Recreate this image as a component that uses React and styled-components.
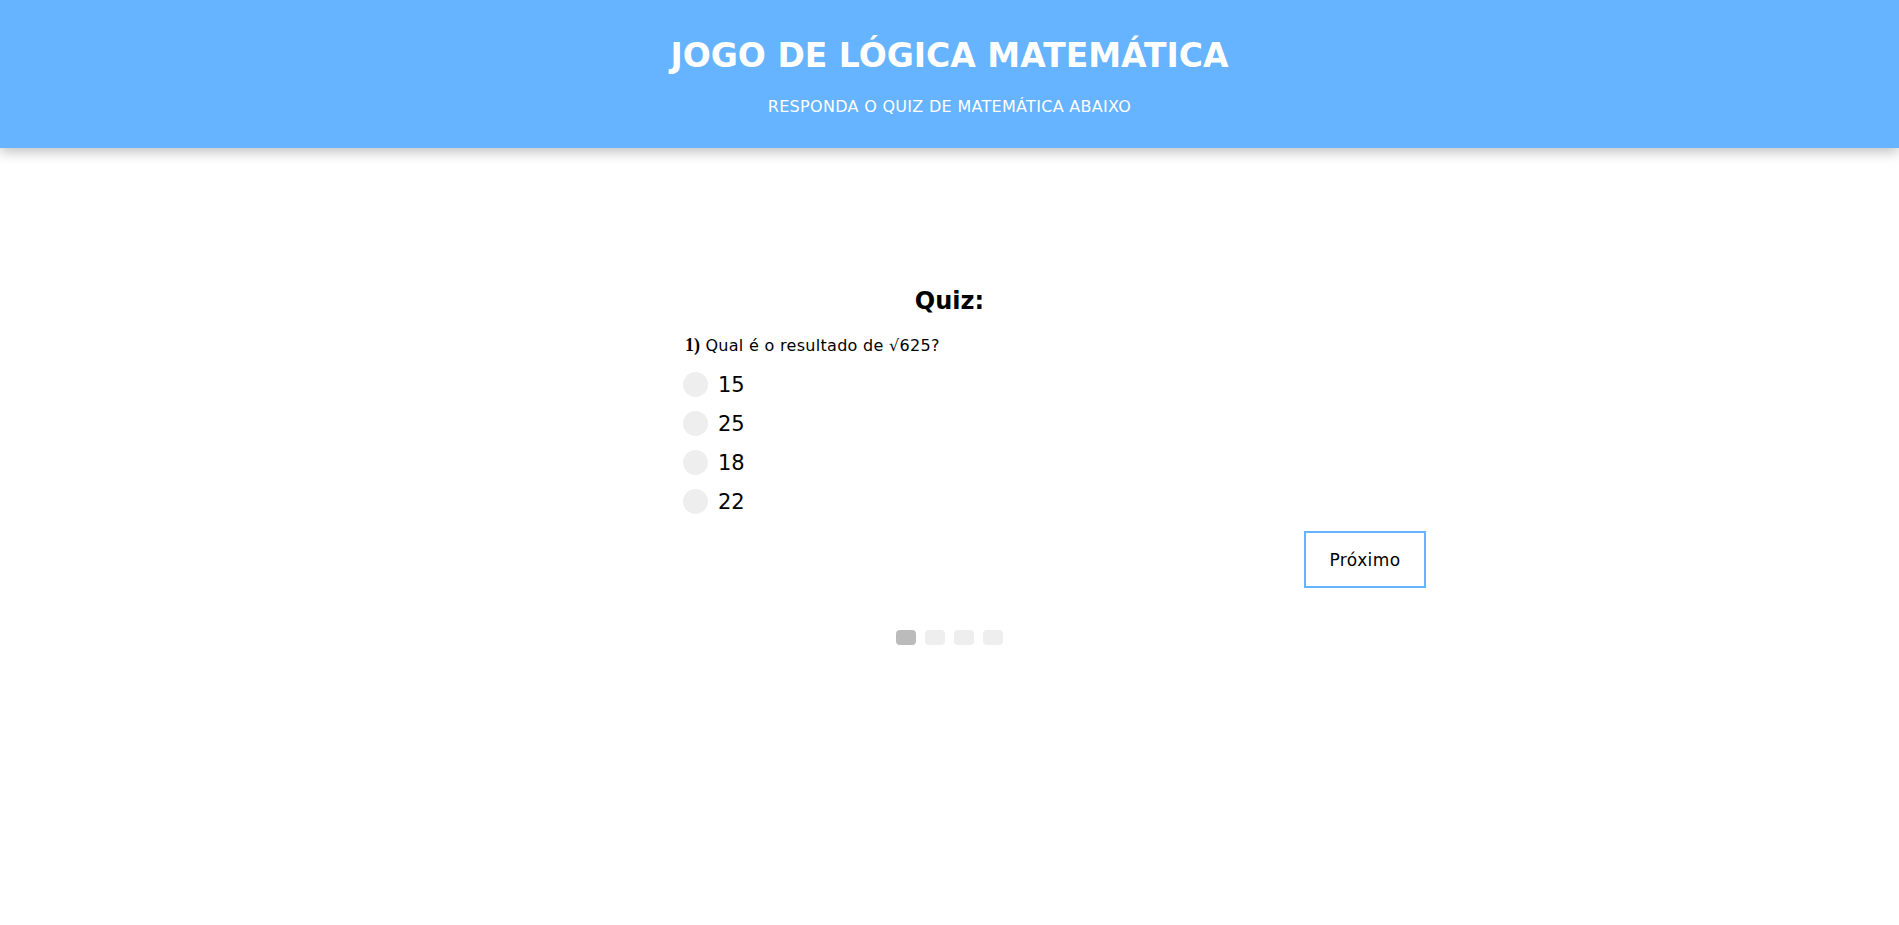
import React, { useState } from "react";
import styled, { createGlobalStyle } from "styled-components";

const GlobalStyle = createGlobalStyle`
  body {
    margin: 0;
    background: #fff;
    font-family: "DejaVu Sans", Verdana, sans-serif;
    color: #000;
  }
`;

const Header = styled.header`
  height: 148px;
  background: #66b3ff;
  box-shadow: 0 4px 12px rgba(0, 0, 0, 0.25);
  display: flex;
  flex-direction: column;
  align-items: center;
  color: #fff;
`;

const Title = styled.h1`
  margin: 37px 0 0;
  font-family: "DejaVu Sans", Verdana, sans-serif;
  font-weight: bold;
  font-size: 33px;
  line-height: 38px;
`;

const Subtitle = styled.p`
  margin: 23px 0 0;
  font-family: "DejaVu Sans", Verdana, sans-serif;
  font-size: 16px;
  line-height: 18px;
  letter-spacing: 0.3px;
`;

const Main = styled.main`
  width: 953px;
  margin: 0 auto;
  padding-top: 139px;
  display: flex;
  flex-direction: column;
`;

const QuizTitle = styled.h2`
  margin: 0;
  text-align: center;
  font-size: 24px;
  line-height: 28px;
  font-weight: bold;
`;

const Question = styled.div`
  margin: 21px 0 0 212px;
  font-size: 16px;
  line-height: 19px;
  letter-spacing: 0.3px;
`;

const Num = styled.b`
  font-family: "Liberation Serif", serif;
  font-size: 18px;
  letter-spacing: 0;
`;

const Options = styled.div`
  margin: 10px 0 0 210px;
  display: flex;
  flex-direction: column;
`;

const Option = styled.label`
  height: 39px;
  display: flex;
  align-items: center;
  gap: 10px;
  font-size: 21px;
  cursor: pointer;
`;

const Radio = styled.span`
  width: 25px;
  height: 25px;
  border-radius: 50%;
  background: ${(p) => (p.$checked ? "#66b3ff" : "#eee")};
  flex: none;
`;

const Actions = styled.div`
  margin-top: 10px;
  display: flex;
  justify-content: flex-end;
`;

const NextButton = styled.button`
  width: 122px;
  height: 57px;
  border: 2px solid #66b3ff;
  background: #fff;
  font-family: "DejaVu Sans", Verdana, sans-serif;
  font-size: 17px;
  letter-spacing: 0.4px;
  color: #000;
  cursor: pointer;
`;

const Dots = styled.div`
  margin-top: 42px;
  display: flex;
  justify-content: center;
  gap: 9px;
`;

const Dot = styled.span`
  width: 20px;
  height: 15px;
  border-radius: 4px;
  background: ${(p) => (p.$active ? "#bbb" : "#eee")};
`;

const options = ["15", "25", "18", "22"];

export default function App() {
  const [selected, setSelected] = useState(null);

  return (
    <React.Fragment>
      <GlobalStyle />
      <Header>
        <Title>JOGO DE LÓGICA MATEMÁTICA</Title>
        <Subtitle>RESPONDA O QUIZ DE MATEMÁTICA ABAIXO</Subtitle>
      </Header>
      <Main>
        <QuizTitle>Quiz:</QuizTitle>
        <Question>
          <Num>1)</Num> Qual é o resultado de √625?
        </Question>
        <Options>
          {options.map((opt) => (
            <Option key={opt} onClick={() => setSelected(opt)}>
              <Radio $checked={selected === opt} />
              {opt}
            </Option>
          ))}
        </Options>
        <Actions>
          <NextButton>Próximo</NextButton>
        </Actions>
        <Dots>
          {[0, 1, 2, 3].map((i) => (
            <Dot key={i} $active={i === 0} />
          ))}
        </Dots>
      </Main>
    </React.Fragment>
  );
}
